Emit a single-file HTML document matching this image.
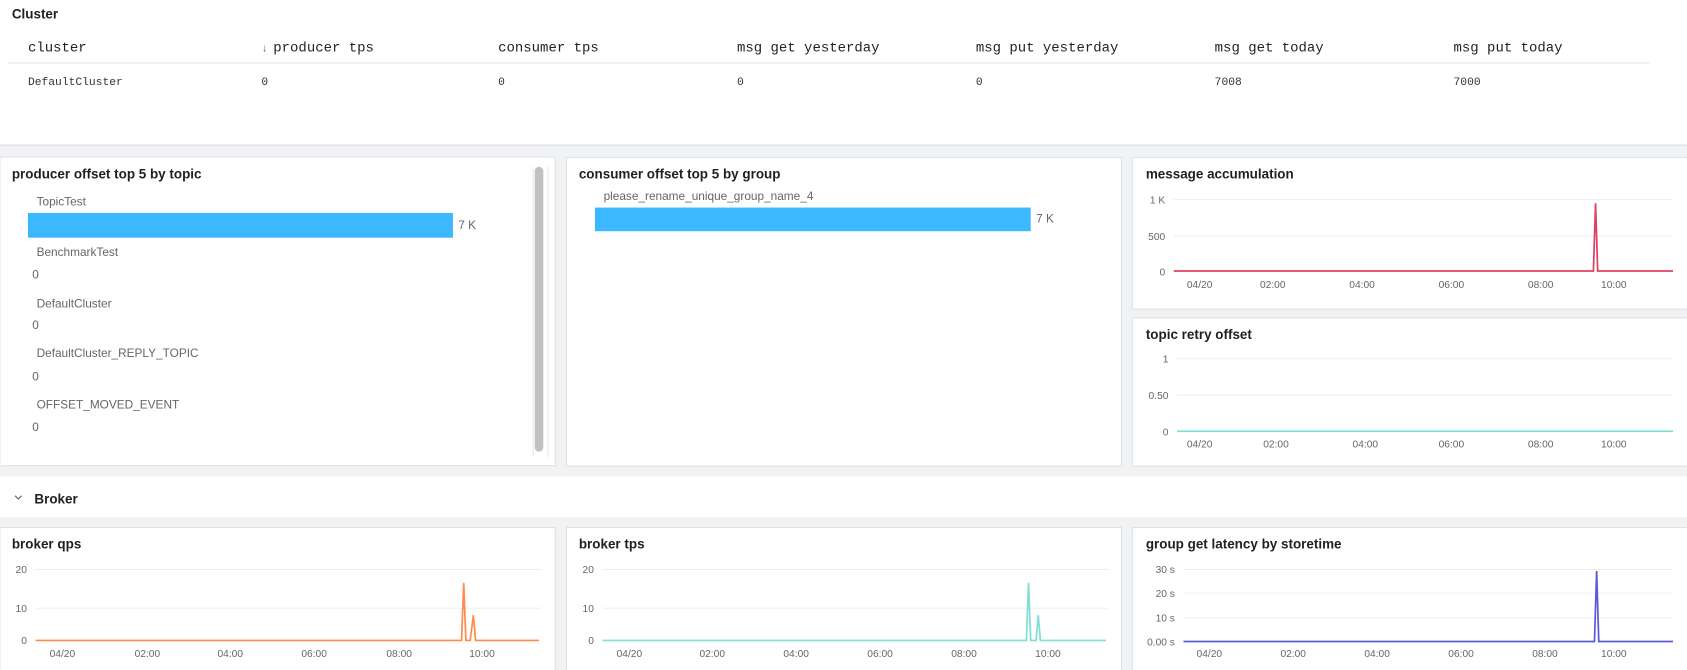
<!DOCTYPE html>
<html><head><meta charset="utf-8"><style>
html,body{margin:0;padding:0;background:#f1f2f4;overflow:hidden}
svg{display:block}
text{font-family:"Liberation Sans",Arial,sans-serif}
.m text, text.m{font-family:"Liberation Mono","DejaVu Sans Mono",monospace}
.t{font-size:12.5px;font-weight:bold;fill:#1f1f24}
.ax{font-size:9.5px;fill:#666}
.lb{font-size:11px;fill:#666}
.g{stroke:#efefef;stroke-width:1}
</style></head><body>
<svg width="1687" height="670" viewBox="0 0 1568 623" preserveAspectRatio="none" xmlns="http://www.w3.org/2000/svg">
<rect width="1568" height="623" fill="#f1f2f4"/>
<rect x="0" y="0" width="1568" height="134" fill="#fff"/>
<line x1="0" y1="135" x2="1568" y2="135" stroke="#dfe1e5"/>
<text x="11" y="17" class="t">Cluster</text>
<g class="m" font-size="13" fill="#222">
<text x="26" y="48">cluster</text>
<text x="243" y="48" font-size="10" fill="#666">↓</text><text x="254" y="48">producer tps</text>
<text x="463" y="48">consumer tps</text>
<text x="685" y="48">msg get yesterday</text>
<text x="907" y="48">msg put yesterday</text>
<text x="1129" y="48">msg get today</text>
<text x="1351" y="48">msg put today</text>
</g>
<line x1="8" y1="58.5" x2="1533" y2="58.5" stroke="#e3e4e8"/>
<g class="m" font-size="10.5" fill="#333">
<text x="26" y="79">DefaultCluster</text>
<text x="243" y="79">0</text><text x="463" y="79">0</text><text x="685" y="79">0</text><text x="907" y="79">0</text>
<text x="1129" y="79">7008</text><text x="1351" y="79">7000</text>
</g>
<rect x="0" y="146" width="516" height="287" fill="#fff" stroke="#dfe1e5"/>
<rect x="526.5" y="146.5" width="516" height="287" fill="#fff" stroke="#dfe1e5"/>
<rect x="1052.5" y="146.5" width="520" height="141" fill="#fff" stroke="#dfe1e5"/>
<rect x="1052.5" y="295.5" width="520" height="138" fill="#fff" stroke="#dfe1e5"/>
<text x="11" y="166" class="t">producer offset top 5 by topic</text>
<rect x="497" y="155" width="8" height="265" rx="4" fill="#c1c1c1"/>
<line x1="495.5" y1="155" x2="495.5" y2="425" stroke="#e8e8e8"/>
<line x1="509.5" y1="155" x2="509.5" y2="425" stroke="#e8e8e8"/>
<g class="lb">
<text x="34" y="191">TopicTest</text>
<text x="34" y="238">BenchmarkTest</text><text x="30" y="259">0</text>
<text x="34" y="286">DefaultCluster</text><text x="30" y="306">0</text>
<text x="34" y="332">DefaultCluster_REPLY_TOPIC</text><text x="30" y="354">0</text>
<text x="34" y="380">OFFSET_MOVED_EVENT</text><text x="30" y="401">0</text>
<text x="426" y="213">7 K</text>
</g>
<rect x="26" y="198" width="395" height="23" fill="#3bb8ff"/>
<text x="538" y="166" class="t">consumer offset top 5 by group</text>
<text x="561" y="186" class="lb">please_rename_unique_group_name_4</text>
<rect x="553" y="193" width="405" height="22" fill="#3bb8ff"/>
<text x="963" y="207" class="lb">7 K</text>
<text x="1065" y="166" class="t">message accumulation</text>
<g class="ax" text-anchor="end"><text x="1083" y="189">1 K</text><text x="1083" y="223">500</text><text x="1083" y="256">0</text></g>
<line x1="1091" y1="185.5" x2="1555" y2="185.5" class="g"/><line x1="1091" y1="219.5" x2="1555" y2="219.5" class="g"/>
<g class="ax" text-anchor="middle"><text x="1115" y="268">04/20</text><text x="1183" y="268">02:00</text><text x="1266" y="268">04:00</text><text x="1349" y="268">06:00</text><text x="1432" y="268">08:00</text><text x="1500" y="268">10:00</text></g>
<polyline points="1091,252 1481,252 1483,189 1485,252 1555,252" fill="none" stroke="#e0405e" stroke-width="1.6"/>
<text x="1065" y="315" class="t">topic retry offset</text>
<g class="ax" text-anchor="end"><text x="1086" y="337">1</text><text x="1086" y="371">0.50</text><text x="1086" y="405">0</text></g>
<line x1="1094" y1="333.5" x2="1555" y2="333.5" class="g"/><line x1="1094" y1="367.5" x2="1555" y2="367.5" class="g"/>
<g class="ax" text-anchor="middle"><text x="1115" y="416">04/20</text><text x="1186" y="416">02:00</text><text x="1269" y="416">04:00</text><text x="1349" y="416">06:00</text><text x="1432" y="416">08:00</text><text x="1500" y="416">10:00</text></g>
<line x1="1094" y1="401" x2="1555" y2="401" stroke="#7fdfd4" stroke-width="1.6"/>
<rect x="0" y="443" width="1568" height="38" fill="#fff"/>
<path d="M14 461 l3 3 l3 -3" fill="none" stroke="#555" stroke-width="1"/>
<text x="32" y="468" class="t">Broker</text>
<rect x="0" y="490.5" width="516" height="140" fill="#fff" stroke="#dfe1e5"/>
<rect x="526.5" y="490.5" width="516" height="140" fill="#fff" stroke="#dfe1e5"/>
<rect x="1052.5" y="490.5" width="520" height="140" fill="#fff" stroke="#dfe1e5"/>
<text x="11" y="510" class="t">broker qps</text>
<g class="ax" text-anchor="end"><text x="25" y="533">20</text><text x="25" y="569">10</text><text x="25" y="599">0</text></g>
<line x1="33" y1="529.5" x2="503" y2="529.5" class="g"/><line x1="33" y1="565.5" x2="503" y2="565.5" class="g"/>
<g class="ax" text-anchor="middle"><text x="58" y="611">04/20</text><text x="137" y="611">02:00</text><text x="214" y="611">04:00</text><text x="292" y="611">06:00</text><text x="371" y="611">08:00</text><text x="448" y="611">10:00</text></g>
<polyline points="33,595.5 429,595.5 431,542 433,595.5 437,595.5 440,572 442,595.5 501,595.5" fill="none" stroke="#ff8b4d" stroke-width="1.6"/>
<text x="538" y="510" class="t">broker tps</text>
<g class="ax" text-anchor="end"><text x="552" y="533">20</text><text x="552" y="569">10</text><text x="552" y="599">0</text></g>
<line x1="560" y1="529.5" x2="1030" y2="529.5" class="g"/><line x1="560" y1="565.5" x2="1030" y2="565.5" class="g"/>
<g class="ax" text-anchor="middle"><text x="585" y="611">04/20</text><text x="662" y="611">02:00</text><text x="740" y="611">04:00</text><text x="818" y="611">06:00</text><text x="896" y="611">08:00</text><text x="974" y="611">10:00</text></g>
<polyline points="560,595.5 954,595.5 956,542 958,595.5 963,595.5 965,572 967,595.5 1028,595.5" fill="none" stroke="#7fdfd4" stroke-width="1.6"/>
<text x="1065" y="510" class="t">group get latency by storetime</text>
<g class="ax" text-anchor="end"><text x="1092" y="533">30 s</text><text x="1092" y="555">20 s</text><text x="1092" y="578">10 s</text><text x="1092" y="600">0.00 s</text></g>
<line x1="1100" y1="529.5" x2="1555" y2="529.5" class="g"/><line x1="1100" y1="551.5" x2="1555" y2="551.5" class="g"/><line x1="1100" y1="574.5" x2="1555" y2="574.5" class="g"/>
<g class="ax" text-anchor="middle"><text x="1124" y="611">04/20</text><text x="1202" y="611">02:00</text><text x="1280" y="611">04:00</text><text x="1358" y="611">06:00</text><text x="1436" y="611">08:00</text><text x="1500" y="611">10:00</text></g>
<polyline points="1100,596.5 1482,596.5 1484,531 1486,596.5 1555,596.5" fill="none" stroke="#5a5ad8" stroke-width="1.6"/>
</svg>
</body></html>
